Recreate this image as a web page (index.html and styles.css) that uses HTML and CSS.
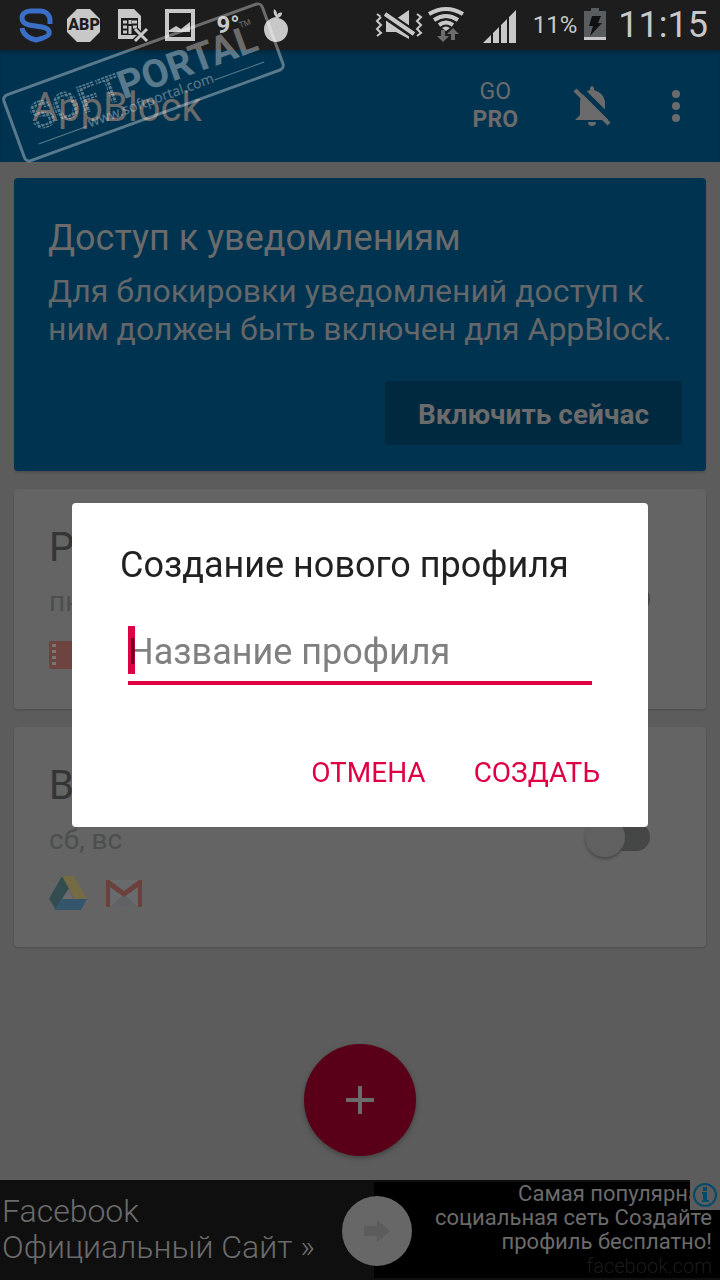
FILE: index.html
```
<!DOCTYPE html>
<html lang="ru">
<head>
  <meta charset="UTF-8" />
  <meta name="viewport" content="width=device-width, initial-scale=1" />
  <title>AppBlock</title>
  <link rel="stylesheet" href="styles.css">
</head>
<body>
  <div class="status-bar">
    <div class="status-left">
      <svg width="48" height="50" viewBox="0 0 48 50" fill="none" stroke="#3a6fc8" stroke-width="5">
        <path d="M38 24v-3C38 14 33 11 28 11H19C13 11 10 14 10 18s3 6 7 7l13 2c5 1 8 3 7 7-1 3-9 5-13 6-6-1-13-5-14-12" />
      </svg>
      <svg width="48" height="50" viewBox="0 0 48 50">
        <path fill="#c8c8c8" d="M17 9h13l10 10v13L30 42H17L7 32V19z" />
        <text class="abp" x="24" y="30" text-anchor="middle">ABP</text>
      </svg>
      <svg width="48" height="50" viewBox="0 0 48 50">
        <path fill="#c8c8c8" d="M10 9h16l7 7v23H10z" />
        <path fill="#1d1d1d" d="M13 18h17v17H13z" />
        <path stroke="#c8c8c8" stroke-width="3" d="M15 22h4M15 27h4M15 32h4M24 22h5M25 27h4M22 20v4M22 26v8" />
        <path stroke="#1d1d1d" stroke-width="6" d="M27 29l12 12M39 29L27 41" />
        <path stroke="#c8c8c8" stroke-width="3" d="M27 29l12 12M39 29L27 41" />
      </svg>
      <svg width="48" height="50" viewBox="0 0 48 50">
        <path fill="none" stroke="#c8c8c8" stroke-width="4" d="M11 11h26v28H11z" />
        <path fill="#c8c8c8" d="M12 31l8-5 5 3 9-7v10H12z" />
      </svg>
      <span class="temperature">9°</span>
      <svg width="48" height="50" viewBox="0 0 48 50" fill="#c8c8c8">
        <path d="M24 17c-2-2-3-4-2-8 3 2 3 4 3 6 1-2 3-3 5-2 0 3-2 4-4 5 5 1 10 5 10 11 0 7-5 13-12 13s-12-6-12-13c0-6 5-11 12-12z" />
      </svg>
    </div>
    <div class="status-right">
      <svg width="48" height="50" viewBox="0 0 48 50" fill="none" stroke="#c8c8c8" stroke-width="2">
        <path d="M2 14l4 3-4 4 4 4-4 4 4 4-4 3M42 14l4 3-4 4 4 4-4 4 4 4-4 3" />
        <path fill="#c8c8c8" stroke="none" d="M11 19h10L34 10v29L21 32H11z" />
        <path stroke="#1d1d1d" stroke-width="9" d="M8 13l32 22" />
        <path stroke-width="4" d="M10 14l29 20" />
      </svg>
      <svg class="wifi" width="38" height="50" viewBox="0 0 38 50">
        <g fill="none" stroke="#c8c8c8" stroke-width="4">
          <path d="M2 14q17-10 34 0M7 20q12-8 24 0M12 25q7-5 14 0" />
        </g>
        <path fill="#c8c8c8" d="M15 28q4-3 8 0l-4 3z" />
        <path fill="#6c6c6c" d="M14 30h4v6h4l-6 6-6-6h4zM24 40v-6h-4l6-6 6 6h-4v6z" />
      </svg>
      <svg class="signal" width="34" height="50" viewBox="0 0 34 50" fill="#c8c8c8">
        <path d="M0 43l8-8v8zM10 33l6-6v16h-6zM18 25l6-6v24h-6zM26 17l7-7v33h-7z" />
      </svg>
      <span class="percent">11%</span>
      <svg class="battery" width="22" height="50" viewBox="0 0 22 50">
        <path fill="#5a5d5f" d="M7 8h8v3h7v26H0V11h7z" />
        <path fill="#c8c8c8" d="M0 37h22v3H0z" />
        <path fill="#111" d="M8 16h9l-3 7h4L6 36l3-10H5z" />
      </svg>
      <time class="clock">11:15</time>
    </div>
  </div>

  <header class="app-bar">
    <h1>AppBlock</h1>
    <button type="button" class="go-pro">GO<strong>PRO</strong></button>
    <button type="button" class="icon-button bell" aria-label="Уведомления отключены">
      <svg width="40" height="44" viewBox="0 0 40 44">
        <path fill="#6b6b6b" d="M18 6V4q2-4 4 0v2c7 2 11 7 11 13v12l6 5H3l5-5V19C8 13 11 8 18 6zM16 38h8q0 4-4 4t-4-4z" />
        <path stroke="#003350" stroke-width="5" d="M5 1l35 35" />
        <path stroke="#6b6b6b" stroke-width="4" d="M3 6l34 34" />
      </svg>
    </button>
    <button type="button" class="icon-button menu" aria-label="Меню">
      <svg width="8" height="32" viewBox="0 0 8 32" fill="#6b6b6b">
        <circle cx="4" cy="4" r="4" /><circle cx="4" cy="16" r="4" /><circle cx="4" cy="28" r="4" />
      </svg>
    </button>
  </header>

  <svg class="stamp" width="290" height="166" viewBox="0 0 290 166">
    <defs>
      <pattern id="dots" width="4" height="4" patternUnits="userSpaceOnUse">
        <path fill="#fff" d="M0 0h3v3H0z" />
      </pattern>
    </defs>
    <g transform="translate(1 96) rotate(-20)" fill="#fff">
      <rect x="1" y="1" width="275" height="70" rx="5" fill="none" stroke="#fff" stroke-width="3" />
      <text class="stamp-soft" x="20" y="45">SOFT</text>
      <text class="stamp-name" x="114" y="45">PORTAL</text>
      <text class="stamp-tm" x="248" y="18">TM</text>
      <text class="stamp-url" x="73" y="60">www.softportal.com</text>
      <path stroke="#fff" d="M19 58h51M206 58h53" />
    </g>
  </svg>

  <main>
    <section class="notice">
      <h2>Доступ к уведомлениям</h2>
      <p>Для блокировки уведомлений доступ к ним должен быть включен для AppBlock.</p>
      <button type="button">Включить сейчас</button>
    </section>

    <section class="profile">
      <div class="profile-info">
        <h2>Р</h2>
        <p>пн</p>
        <div class="apps">
          <svg width="38" height="38" viewBox="0 0 38 38">
            <rect y="5" width="38" height="28" rx="2" fill="#6e4441" />
            <path fill="#777" d="M3 8h4v3H3zM3 14h4v3H3zM3 20h4v3H3zM3 26h4v3H3z" />
          </svg>
        </div>
      </div>
      <input type="checkbox" class="switch" aria-label="Профиль, пн">
    </section>

    <section class="profile">
      <div class="profile-info">
        <h2>В</h2>
        <p>сб, вс</p>
        <div class="apps">
          <svg width="38" height="38" viewBox="0 0 38 38">
            <path fill="#334c52" d="M13 2l7 12L7 36 0 25z" />
            <path fill="#746a43" d="M13 2h12l13 23H26z" />
            <path fill="#34556b" d="M12 25h26l-6 11H6z" />
            <path fill="#6c6c6c" d="M19 16l5 9H13z" />
          </svg>
          <svg width="38" height="38" viewBox="0 0 38 38">
            <rect x="1" y="6" width="36" height="27" rx="2" fill="#686a6b" />
            <path fill="#606264" d="M4 33l15-12 15 12z" />
            <path fill="#6b403d" d="M1 33V7q0-2 3-1l15 11L34 6q3-1 3 1v26h-4V13L19 23 5 13v20z" />
          </svg>
        </div>
      </div>
      <input type="checkbox" class="switch" aria-label="Профиль, сб, вс">
    </section>

    <button type="button" class="fab" aria-label="Добавить профиль">
      <svg width="28" height="28" viewBox="0 0 28 28" stroke="#6b6b6b" stroke-width="4"><path d="M14 0v28M0 14h28" /></svg>
    </button>
  </main>

  <footer class="ad">
    <a href="#" class="ad-title">Facebook<br>Официальный Сайт »</a>
    <div class="ad-text">
      <p>Самая популярная социальная сеть Создайте профиль бесплатно!</p>
      <span class="ad-domain">facebook.com</span>
      <a href="#" class="ad-go" aria-label="Перейти">
        <svg width="26" height="24" viewBox="0 0 26 24" fill="#5c5c5c"><path d="M0 7h13V1l13 11-13 11v-6H0z" /></svg>
      </a>
      <a href="#" class="ad-info" aria-label="О рекламе">
        <svg width="24" height="24" viewBox="0 0 24 24">
          <circle cx="12" cy="12" r="11" fill="none" stroke="#004a6b" stroke-width="2" />
          <path fill="#004a6b" d="M10 4h4v4h-4zM9 9h5v8h2v2H9v-2h1v-6H9z" />
        </svg>
      </a>
    </div>
  </footer>

  <div class="overlay">
    <form class="dialog" role="dialog" aria-labelledby="dialogTitle">
      <h2 id="dialogTitle">Создание нового профиля</h2>
      <div class="field">
        <input type="text" id="profileName" placeholder="Название профиля" aria-label="Название профиля">
        <span class="caret"></span>
      </div>
      <div class="dialog-actions">
        <button type="button">ОТМЕНА</button>
        <button type="button">СОЗДАТЬ</button>
      </div>
    </form>
  </div>
</body>
</html>
```
FILE: styles.css
```
* {
  box-sizing: border-box;
}

body {
  margin: 0;
  min-height: 100vh;
  display: flex;
  flex-direction: column;
  position: relative;
  background-color: #5c5c5c;
  color: #6b6b6b;
  font-family: Roboto, "Noto Sans", sans-serif;
}

h1, h2, p {
  margin: 0;
  font-weight: normal;
}

button {
  border: none;
  padding: 0;
  background: none;
  color: inherit;
  font-family: inherit;
  cursor: pointer;
}

a {
  color: inherit;
  text-decoration: none;
}

svg {
  display: block;
}

/* status bar */
.status-bar {
  display: flex;
  justify-content: space-between;
  height: 50px;
  padding: 0 12px;
  background-color: #1d1d1d;
  color: #c8c8c8;
}

.status-left, .status-right {
  display: flex;
  align-items: center;
}

.abp {
  font-size: 16px;
  font-weight: 900;
  fill: #1d1d1d;
}

.temperature {
  width: 48px;
  text-align: center;
  font-size: 24px;
  font-weight: bold;
}

.wifi {
  margin-left: 4px;
}

.signal {
  margin-left: 18px;
}

.percent {
  margin-left: 16px;
  font-size: 24px;
}

.battery {
  margin: 0 12px 0 7px;
}

.clock {
  font-size: 36px;
}

/* app bar */
.app-bar {
  display: flex;
  align-items: center;
  height: 112px;
  padding: 0 40px 0 32px;
  background-color: #003350;
  box-shadow: inset 0 3px 3px #002a42;
}

.app-bar h1 {
  flex: 1;
  padding-top: 2px;
  font-size: 40px;
}

.go-pro {
  margin-right: 54px;
  font-size: 23px;
  line-height: 28px;
}

.go-pro strong {
  display: block;
}

.bell {
  margin-right: 60px;
}

.stamp {
  position: absolute;
  top: 0;
  left: 0;
  opacity: 0.35;
  pointer-events: none;
}

.stamp-soft, .stamp-name {
  font-size: 39px;
  font-weight: bold;
}

.stamp-soft {
  fill: url(#dots);
}

.stamp-url {
  font-family: "Noto Sans", sans-serif;
  font-size: 14px;
}

.stamp-tm {
  font-size: 8px;
}

/* content */
main {
  flex: 1;
  display: flex;
  flex-direction: column;
  padding: 16px 14px 24px;
}

.notice {
  display: flex;
  flex-direction: column;
  padding: 36px 24px 26px 34px;
  border-radius: 4px;
  background-color: #003350;
  box-shadow: 0 2px 2px #505050;
}

.notice h2 {
  font-size: 36px;
  line-height: 48px;
}

.notice p {
  margin-top: 10px;
  color: #646769;
  font-size: 32px;
  line-height: 38px;
}

.notice button {
  align-self: flex-end;
  margin-top: 33px;
  padding: 18px 33px 14px;
  border-radius: 4px;
  background-color: #002940;
  font-size: 28px;
  font-weight: bold;
  line-height: 32px;
}

.profile {
  display: flex;
  align-items: center;
  justify-content: space-between;
  height: 220px;
  margin-top: 18px;
  padding: 0 56px 0 35px;
  border-radius: 4px;
  background-color: #646464;
  box-shadow: 0 1px 2px #4c4c4c;
}

.profile h2 {
  color: #353535;
  font-size: 40px;
  line-height: 48px;
}

.profile p {
  margin-top: 14px;
  color: #4b4f4e;
  font-size: 28px;
  line-height: 32px;
}

.apps {
  display: flex;
  gap: 18px;
  margin-top: 18px;
}

.switch {
  appearance: none;
  display: flex;
  align-items: center;
  width: 60px;
  height: 28px;
  margin: 0;
  border-radius: 14px;
  background-color: #444746;
}

.switch::before {
  content: "";
  flex: none;
  width: 40px;
  height: 40px;
  margin-left: -5px;
  border-radius: 50%;
  background-color: #606060;
  box-shadow: 0 2px 3px #484848;
}

.switch:checked {
  justify-content: flex-end;
}

.fab {
  display: flex;
  align-items: center;
  justify-content: center;
  align-self: center;
  width: 112px;
  height: 112px;
  margin-top: auto;
  border-radius: 50%;
  background-color: #590018;
  box-shadow: 0 2px 5px #404040;
}

/* ad banner */
.ad {
  display: flex;
  height: 100px;
  padding: 2px 0;
  background-color: #0f0f0f;
  font-weight: 300;
}

.ad-title {
  width: 52%;
  padding: 11px 2px;
  font-size: 32px;
  line-height: 36px;
}

.ad-text {
  width: 48%;
  position: relative;
  padding-right: 8px;
  background-color: #000;
  font-size: 22px;
  line-height: 24px;
  text-align: right;
}

.ad-text p {
  padding-left: 60px;
}

.ad-domain {
  color: #1c1c1c;
  font-size: 20px;
}

.ad-go {
  position: absolute;
  top: 14px;
  left: -32px;
  display: grid;
  place-items: center;
  width: 70px;
  height: 70px;
  border-radius: 50%;
  background-color: #676767;
}

.ad-info {
  position: absolute;
  top: -2px;
  right: 0;
  display: grid;
  place-items: center;
  width: 30px;
  height: 30px;
  background-color: #5c5c5c;
}

/* new profile dialog */
.overlay {
  position: fixed;
  inset: 50px 0 0;
  display: flex;
  align-items: center;
  justify-content: center;
}

.dialog {
  width: 80%;
  padding: 36px 48px 30px;
  border-radius: 4px;
  background-color: #fff;
}

.dialog h2 {
  color: #212121;
  font-size: 36px;
  line-height: 52px;
}

.field {
  position: relative;
  margin: 32px 8px 0;
}

.field input {
  display: block;
  width: 100%;
  height: 62px;
  padding: 0;
  border: none;
  border-bottom: 4px solid #df0043;
  outline: none;
  background: none;
  font-family: inherit;
  font-size: 36px;
}

.field input::placeholder {
  color: #808080;
}

.caret {
  position: absolute;
  top: 3px;
  left: 0;
  width: 7px;
  height: 48px;
  background-color: #df0043;
  mix-blend-mode: multiply;
}

.dialog-actions {
  display: flex;
  justify-content: flex-end;
  gap: 48px;
  margin-top: 64px;
  color: #df0043;
}

.dialog-actions button {
  font-size: 28px;
  line-height: 48px;
}
```
